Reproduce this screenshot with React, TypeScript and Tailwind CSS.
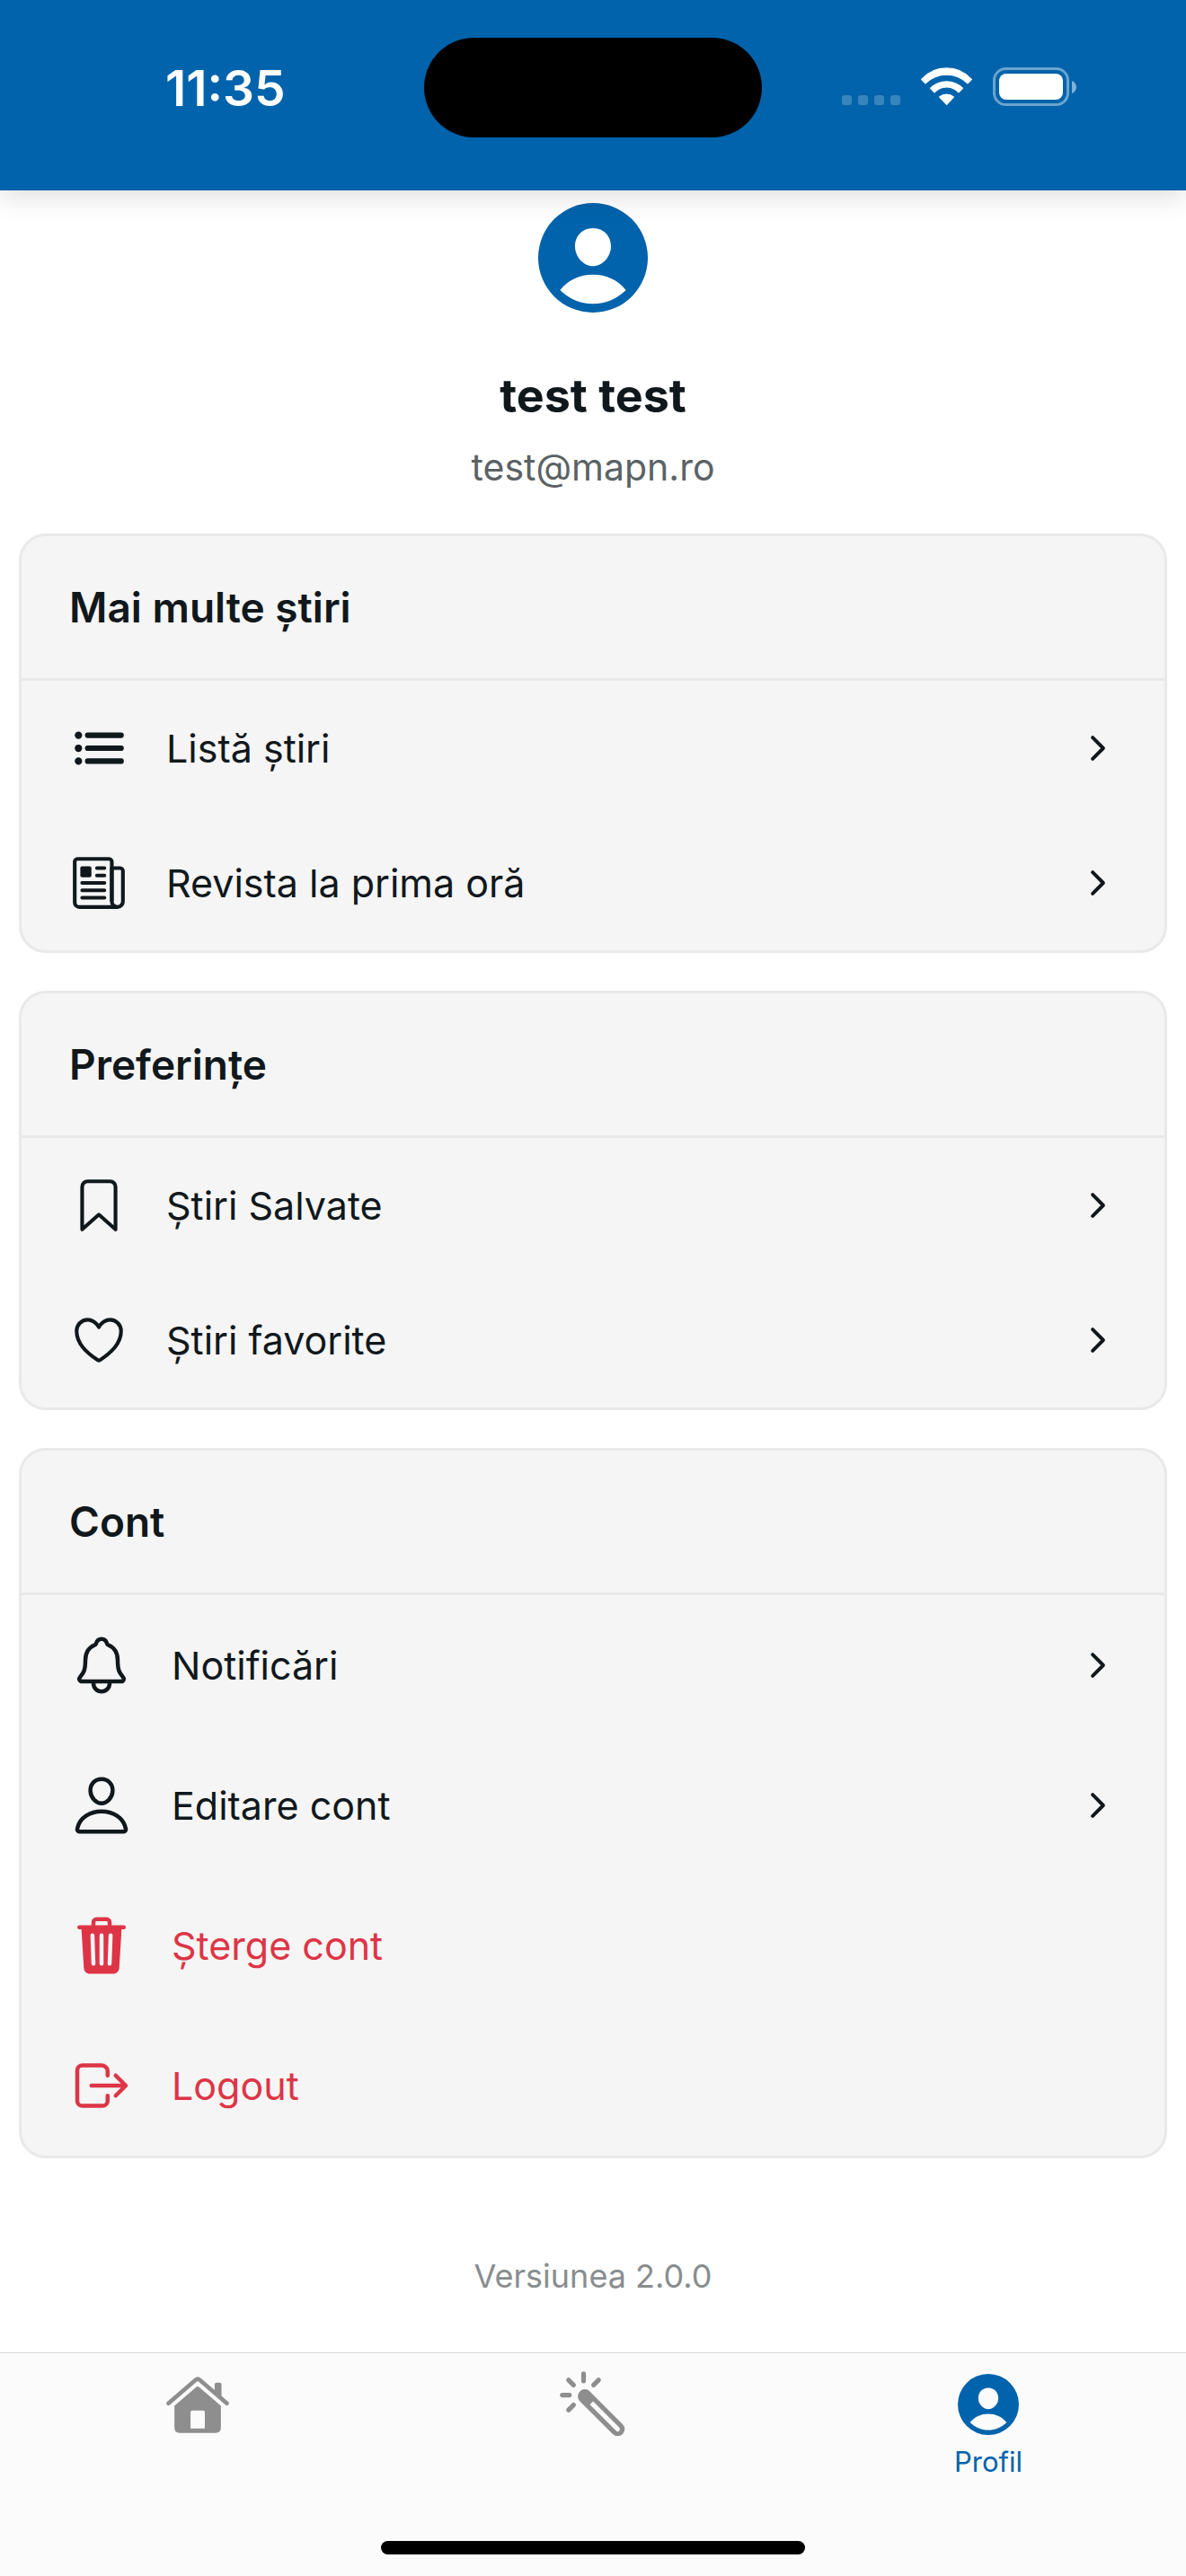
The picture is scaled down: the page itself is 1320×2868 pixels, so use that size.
import type { ComponentType, ReactNode } from "react";
import {
  IoBookmarkOutline,
  IoChevronForward,
  IoColorWandOutline,
  IoHeartOutline,
  IoList,
  IoLogOutOutline,
  IoNewspaperOutline,
  IoNotificationsOutline,
  IoPersonOutline,
  IoTrash,
} from "react-icons/io5";

type IconType = ComponentType<{ className?: string }>;

function PersonCircle({ className }: { className?: string }) {
  return (
    <svg viewBox="0 0 366 366" fill="currentColor" fillRule="evenodd" aria-hidden="true" className={className}>
      <path d="M183 0a183 183 0 1 0 0 366a183 183 0 1 0 0-366ZM183 84c36 0 60 27 60 61c0 35-28 66-60 66s-60-31-60-66c0-34 24-61 60-61ZM73 291c27-34 65-52 110-52s83 18 110 52c-28 28-68 46-110 46s-82-18-110-46Z" />
    </svg>
  );
}

function HomeIcon({ className }: { className?: string }) {
  return (
    <svg viewBox="0 0 210 190" fill="none" aria-hidden="true" className={className}>
      <path d="M7 90L98 11q7-6 14 0l91 79" stroke="currentColor" strokeWidth="14" strokeLinecap="round" strokeLinejoin="round" />
      <path d="M162 50V26q0-6 6-6h11q6 0 6 6v46Z" fill="currentColor" />
      <path
        fillRule="evenodd"
        fill="currentColor"
        d="M27 98L99 36q6-5 12 0l72 62v73q0 18-18 18H45q-18 0-18-18ZM86 114q-5 0-5 5v55h48v-55q0-5-5-5Z"
      />
    </svg>
  );
}

function StatusBar() {
  return (
    <header className="relative z-10 grid h-[212px] grid-cols-3 bg-[#0063ab] text-white shadow-[0_6px_30px_rgba(0,0,0,0.14)]">
      <div className="pt-[66px] pl-[184px] text-[55px] leading-[64px] font-semibold">11:35</div>
      <div className="mt-[42px] h-[111px] w-[376px] justify-self-center rounded-full bg-black" />
      <div className="mt-[75px] flex h-[43px] items-end justify-end gap-[23px] pr-[122px]">
        <svg viewBox="0 0 65 12" className="h-3 w-[65px]" aria-hidden="true" fill="#fff" fillOpacity="0.22">
          <rect x="0" y="0" width="11" height="11" rx="3" />
          <rect x="18" y="0" width="11" height="11" rx="3" />
          <rect x="36" y="0" width="11" height="11" rx="3" />
          <rect x="54" y="0" width="11" height="11" rx="3" />
        </svg>
        <svg
          viewBox="0 0 171 129"
          className="h-[43px] w-[57px]"
          aria-hidden="true"
          fill="#fff"
          stroke="#fff"
          strokeWidth="4"
          strokeLinejoin="round"
        >
          <path d="M2 40A112 112 0 0 1 169 40L156 53A100 100 0 0 0 15 53Z" />
          <path d="M32 70A75 75 0 0 1 139 70L126 83A56 56 0 0 0 45 83Z" />
          <path d="M62 99A36 36 0 0 1 109 99L86 124Z" />
        </svg>
        <svg viewBox="0 0 93 43" className="h-[43px] w-[93px]" aria-hidden="true">
          <rect x="1.5" y="1.5" width="82" height="40" rx="13" fill="none" stroke="#fff" strokeOpacity="0.42" strokeWidth="3" />
          <rect x="7" y="7" width="71" height="29" rx="8" fill="#fff" />
          <path d="M88 15c3 1 5 4 5 7s-2 6-5 7Z" fill="#fff" fillOpacity="0.5" />
        </svg>
      </div>
    </header>
  );
}

function Card({ title, children }: { title: string; children: ReactNode }) {
  return (
    <section className="overflow-hidden rounded-[30px] border-3 border-[#e9e9e9] bg-[#f5f5f5]">
      <h2 className="border-b-3 border-[#e9e9e9] px-[53px] py-[49px] text-[46px] leading-[60px] font-semibold">{title}</h2>
      <ul>{children}</ul>
    </section>
  );
}

type RowProps = { icon: IconType; label: string; large?: boolean; danger?: boolean; arrow?: boolean };

function Row({ icon: Icon, label, large, danger, arrow = true }: RowProps) {
  return (
    <li>
      <button
        type="button"
        className={`flex w-full items-center px-[53px] text-left text-[43px] leading-[60px] ${large ? "h-[156px]" : "h-[150px]"} ${danger ? "text-[#dd3546]" : ""}`}
      >
        <Icon className={large ? "size-[72px]" : "size-[66px]"} />
        <span className="ml-[42px] flex-1">{label}</span>
        {arrow && <IoChevronForward className="size-[42px]" />}
      </button>
    </li>
  );
}

export default function App() {
  return (
    <div className="flex min-h-screen flex-col bg-white font-['Inter',sans-serif] text-[#11181c]">
      <StatusBar />
      <main className="flex flex-1 flex-col">
        <div className="flex flex-col items-center pt-[14px]">
          <PersonCircle className="size-[122px] text-[#0063ab]" />
          <h1 className="mt-[61px] text-[52px] leading-[64px] font-bold">test test</h1>
          <p className="mt-[19px] text-[41px] leading-[56px] text-[#5b6265]">test@mapn.ro</p>
        </div>
        <div className="mt-[46px] flex flex-col gap-[42px] px-[21px]">
          <Card title="Mai multe știri">
            <Row icon={IoList} label="Listă știri" />
            <Row icon={IoNewspaperOutline} label="Revista la prima oră" />
          </Card>
          <Card title="Preferințe">
            <Row icon={IoBookmarkOutline} label="Știri Salvate" />
            <Row icon={IoHeartOutline} label="Știri favorite" />
          </Card>
          <Card title="Cont">
            <Row large icon={IoNotificationsOutline} label="Notificări" />
            <Row large icon={IoPersonOutline} label="Editare cont" />
            <Row large danger arrow={false} icon={IoTrash} label="Șterge cont" />
            <Row large danger arrow={false} icon={IoLogOutOutline} label="Logout" />
          </Card>
        </div>
        <p className="mt-[107px] text-center text-[36px] leading-[48px] text-[#898d8f]">Versiunea 2.0.0</p>
      </main>
      <footer className="border-t border-[#d8d8d8] bg-[#fbfbfb]">
        <nav className="grid h-[209px] grid-cols-3 text-[#8e8e8e]">
          <a href="#acasa" aria-label="Acasă" className="flex flex-col items-center pt-[26px]">
            <HomeIcon className="h-[63px] w-[70px]" />
          </a>
          <a href="#descopera" aria-label="Descoperă" className="flex flex-col items-center pt-[15px]">
            <IoColorWandOutline className="size-[84px]" />
          </a>
          <a href="#profil" aria-current="page" className="flex flex-col items-center pt-[23px] text-[#0063ab]">
            <PersonCircle className="size-[68px]" />
            <span className="mt-[10px] text-[31px] leading-[40px]">Profil</span>
          </a>
        </nav>
        <div className="mx-auto mb-[24px] h-[15px] w-[472px] rounded-full bg-black" />
      </footer>
    </div>
  );
}
